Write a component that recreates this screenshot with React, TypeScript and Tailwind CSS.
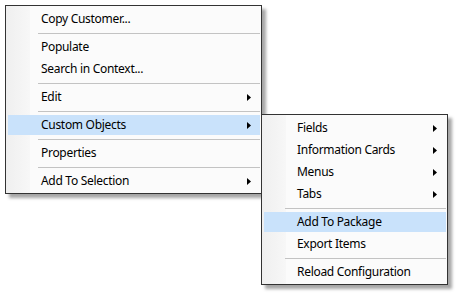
import React from "react";

type Item =
  | { kind: "item"; label: string; sub?: boolean; active?: boolean }
  | { kind: "sep" };

const mainItems: Item[] = [
  { kind: "item", label: "Copy Customer..." },
  { kind: "sep" },
  { kind: "item", label: "Populate" },
  { kind: "item", label: "Search in Context..." },
  { kind: "sep" },
  { kind: "item", label: "Edit", sub: true },
  { kind: "sep" },
  { kind: "item", label: "Custom Objects", sub: true, active: true },
  { kind: "sep" },
  { kind: "item", label: "Properties" },
  { kind: "sep" },
  { kind: "item", label: "Add To Selection", sub: true },
];

const subItems: Item[] = [
  { kind: "item", label: "Fields", sub: true },
  { kind: "item", label: "Information Cards", sub: true },
  { kind: "item", label: "Menus", sub: true },
  { kind: "item", label: "Tabs", sub: true },
  { kind: "sep" },
  { kind: "item", label: "Add To Package", active: true },
  { kind: "item", label: "Export Items" },
  { kind: "sep" },
  { kind: "item", label: "Reload Configuration" },
];

function Arrow() {
  return (
    <svg width="4" height="7" viewBox="0 0 4 7" className="block">
      <polygon points="0,0 4,3.5 0,7" fill="#000" />
    </svg>
  );
}

function Menu({ items, sepIndent }: { items: Item[]; sepIndent: "main" | "sub" }) {
  return (
    <div className="relative border border-[#333333] bg-[#fbfbfb] pt-[2px] pb-[1px] shadow-[4px_4px_3px_rgba(0,0,0,0.35)]">
      <div className="absolute left-0 top-0 bottom-0 w-[24px] bg-[linear-gradient(to_right,#efefef,#f7f7f7)]" />
      <div className="relative flex flex-col">
        {items.map((it, i) =>
          it.kind === "sep" ? (
            <div key={i} className="h-[6px] pt-[3px]">
              <div
                className={
                  "h-px bg-[#c3c3c3] mr-[1px] " +
                  (sepIndent === "main" ? "ml-[32px]" : "ml-[23px]")
                }
              />
            </div>
          ) : (
            <div key={i} className="h-[22px] py-[1px] pl-[2px] pr-[1px]">
              <div
                className={
                  "h-[20px] flex items-center pl-[33px] pr-[9px] text-[12px] tracking-[-0.3px] text-black " +
                  (it.active ? "bg-[#c9e2fb]" : "")
                }
              >
                <span className="flex-1 leading-none whitespace-nowrap">{it.label}</span>
                {it.sub && <Arrow />}
              </div>
            </div>
          )
        )}
      </div>
    </div>
  );
}

export default function App() {
  return (
    <div
      className="relative w-[459px] h-[294px] bg-white overflow-hidden"
      style={{ fontFamily: '"Segoe UI", "Noto Sans", "Open Sans", sans-serif' }}
    >
      <div className="absolute left-[5px] top-[5px] w-[257px]">
        <Menu items={mainItems} sepIndent="main" />
      </div>
      <div className="absolute left-[261px] top-[114px] w-[187px]">
        <Menu items={subItems} sepIndent="sub" />
      </div>
    </div>
  );
}
